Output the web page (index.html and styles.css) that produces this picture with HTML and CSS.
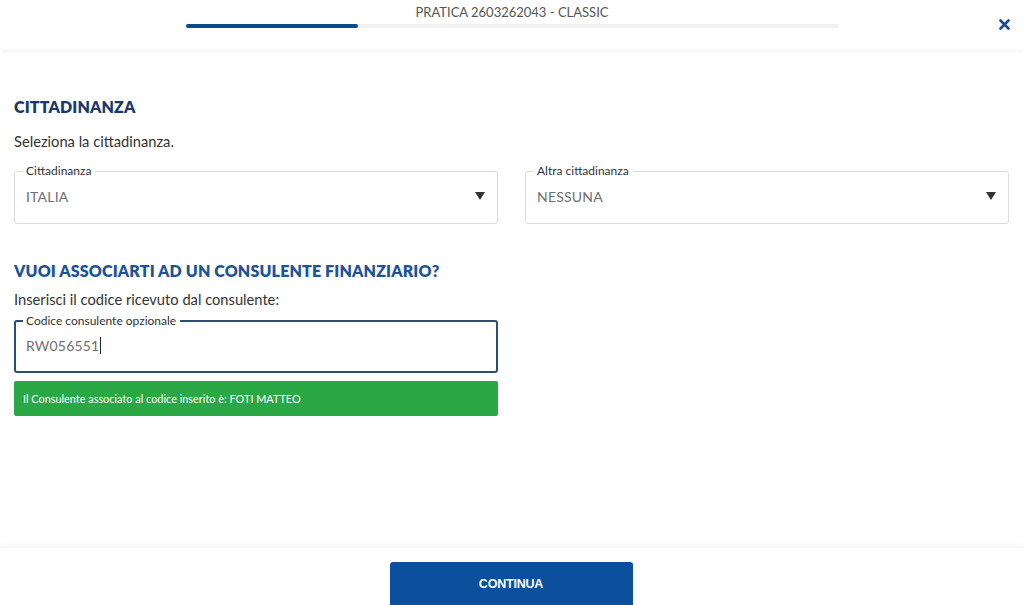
FILE: index.html
```html
<!DOCTYPE html>
<html lang="it">
<head>
<meta charset="utf-8">
<title>Pratica</title>
<link rel="stylesheet" href="styles.css">
</head>
<body>
<div class="page">
  <header class="topbar">
    <div class="topbar-center">
      <div class="pratica">PRATICA 2603262043 - CLASSIC</div>
      <div class="progress"><div class="progress-fill" style="width:26.4%"></div></div>
    </div>
    <button class="close" aria-label="Chiudi">
      <svg width="11" height="11" viewBox="0 0 11 11"><path d="M1.5 1.5 L9.5 9.5 M9.5 1.5 L1.5 9.5" stroke="#164c8c" stroke-width="2.6" stroke-linecap="round"/></svg>
    </button>
  </header>

  <main class="content">
    <h2 class="title title-navy">CITTADINANZA</h2>
    <p class="desc">Seleziona la cittadinanza.</p>
    <div class="row">
      <fieldset class="field">
        <legend>Cittadinanza</legend>
        <div class="field-inner">
          <span class="value">ITALIA</span>
          <span class="caret"></span>
        </div>
      </fieldset>
      <fieldset class="field">
        <legend>Altra cittadinanza</legend>
        <div class="field-inner">
          <span class="value">NESSUNA</span>
          <span class="caret"></span>
        </div>
      </fieldset>
    </div>

    <h2 class="title title-blue title-second">VUOI ASSOCIARTI AD UN CONSULENTE FINANZIARIO?</h2>
    <p class="desc desc-second">Inserisci il codice ricevuto dal consulente:</p>
    <div class="col">
      <fieldset class="field field-active">
        <legend>Codice consulente opzionale</legend>
        <div class="field-inner">
          <span class="value">RW056551<span class="cursor"></span></span>
        </div>
      </fieldset>
      <div class="alert">Il Consulente associato al codice inserito è: FOTI MATTEO</div>
    </div>
  </main>

  <footer class="footer">
    <button class="btn">CONTINUA</button>
  </footer>
</div>
</body>
</html>
```
FILE: styles.css
```css
* { box-sizing: border-box; }
html, body { margin: 0; padding: 0; background: #fff; }
body {
  font-family: "Lato", "Open Sans", "Liberation Sans", sans-serif;
  color: #333;
}
.page {
  height: 605px;
  display: flex;
  flex-direction: column;
  overflow: hidden;
}
.topbar {
  height: 50px;
  flex: none;
  display: flex;
  justify-content: center;
  box-shadow: 0 2px 4px rgba(0,0,0,0.045);
  position: relative;
  z-index: 1;
}
.topbar-center {
  width: 653px;
  padding-top: 5px;
  display: flex;
  flex-direction: column;
  align-items: center;
}
.pratica {
  font-size: 13px;
  color: #555;
  line-height: 15px;
}
.progress {
  width: 100%;
  height: 4px;
  margin-top: 4px;
  background: #f1f1f1;
  border-radius: 2px;
}
.progress-fill {
  height: 100%;
  background: #0c4a8e;
  border-radius: 2px;
}
.close {
  position: absolute;
  right: 14px;
  top: 19px;
  border: 0;
  background: none;
  padding: 0;
  width: 11px;
  height: 11px;
  display: flex;
}
.content {
  flex: 1;
  padding: 47px 15px 0 14px;
}
.title {
  margin: 0;
  font-size: 16px;
  font-weight: 800;
  line-height: 20px;
  letter-spacing: 0.15px;
}
.title-navy { color: #1a3a6c; }
.title-blue { color: #1c5597; }
.title-second { margin-top: 37px; }
.desc {
  margin: 15px 0 0;
  font-size: 14.7px;
  line-height: 18px;
  color: #333;
}
.desc-second { margin-top: 9px; }
.row {
  display: grid;
  grid-template-columns: 484px 484px;
  column-gap: 27px;
  margin-top: 14px;
}
.col {
  width: 484px;
  margin-top: 6px;
}
.field {
  margin: 0;
  padding: 0 12px 7px 11px;
  border: 1px solid #dcdcdc;
  border-radius: 3px;
  min-width: 0;
}
.field legend {
  font-size: 12px;
  color: #333;
  padding: 0 4px 0 3px;
  line-height: 14px;
  margin-left: -3px;
}
.field-inner {
  display: flex;
  align-items: center;
  justify-content: space-between;
  height: 38px;
  padding-bottom: 2px;
}
.value {
  font-size: 14px;
  color: #6f6f6f;
  letter-spacing: 0.2px;
  display: flex;
  align-items: center;
}
.caret {
  width: 0;
  height: 0;
  border-left: 5.5px solid transparent;
  border-right: 5.5px solid transparent;
  border-top: 8px solid #333;
}
.field-active {
  border: 2px solid #2b4e78;
  padding-left: 10px;
  padding-bottom: 6px;
}
.field-active .field-inner { height: 37px; }
.field-active legend { margin-left: -3px; }
.cursor {
  display: inline-block;
  width: 1px;
  height: 17px;
  background: #222;
  margin-left: 1px;
}
.alert {
  margin-top: 8px;
  height: 35px;
  background: #2aa845;
  color: #fff;
  font-size: 10.9px;
  border-radius: 2px;
  padding: 0 9px;
  display: flex;
  align-items: center;
}
.footer {
  height: 57px;
  flex: none;
  display: flex;
  justify-content: center;
  padding-top: 14px;
  box-shadow: 0 -3px 6px rgba(0,0,0,0.04);
  position: relative;
}
.btn {
  width: 243px;
  height: 46px;
  border: 0;
  border-radius: 3px;
  background: #0b4f9d;
  color: #fff;
  font-family: "Liberation Sans", Arial, sans-serif;
  font-weight: 700;
  font-size: 12.5px;
  letter-spacing: -0.2px;
  padding: 0 0 2px;
  margin-left: -2px;
}
```
